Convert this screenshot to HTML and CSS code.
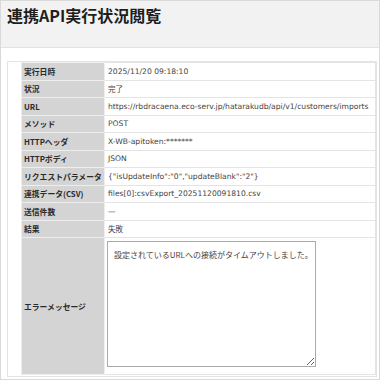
FILE: index.html
```html
<!DOCTYPE html>
<html lang="ja">
<head>
    <meta charset="UTF-8">
    <title>連携API実行状況閲覧</title>
    <link rel="stylesheet" href="styles.css">
</head>
<body>

<div class="window">
    <div class="header">
        <h1 class="title">連携API実行状況閲覧</h1>
    </div>
    <div class="content">
        <div class="panel">
            <table class="detail">
                <tr><th>実行日時</th><td>2025/11/20 09:18:10</td></tr>
                <tr><th>状況</th><td>完了</td></tr>
                <tr><th>URL</th><td>https://rbdracaena.eco-serv.jp/hatarakudb/api/v1/customers/imports</td></tr>
                <tr><th>メソッド</th><td>POST</td></tr>
                <tr><th>HTTPヘッダ</th><td>X-WB-apitoken:*******</td></tr>
                <tr><th>HTTPボディ</th><td>JSON</td></tr>
                <tr><th>リクエストパラメータ</th><td>{"isUpdateInfo":"0","updateBlank":"2"}</td></tr>
                <tr><th>連携データ(CSV)</th><td>files[0]:csvExport_20251120091810.csv</td></tr>
                <tr><th>送信件数</th><td>—</td></tr>
                <tr><th>結果</th><td>失敗</td></tr>
                <tr class="error-row">
                    <th>エラーメッセージ</th>
                    <td><textarea class="message" readonly>設定されているURLへの接続がタイムアウトしました。</textarea></td>
                </tr>
            </table>
        </div>
    </div>
</div>

</body>
</html>
```

FILE: styles.css
```css
body {
    margin: 0;
    font-family: "DejaVu Sans", "Noto Sans CJK JP", sans-serif;
    background-color: #fff;
}

.window {
    width: 378px;
    height: 378px;
    border: 1px solid #d9d9d9;
    background-color: #f4f4f4;
    display: flex;
    flex-direction: column;
}

.header {
    height: 46px;
    background-color: #f2f2f2;
    border-bottom: 1px solid #e2e2e2;
    padding-left: 6px;
}

.title {
    margin: 0;
    padding-top: 3px;
    font-family: "Noto Sans CJK JP", sans-serif;
    font-size: 16px;
    font-weight: bold;
    line-height: 22px;
    color: #1e1e1e;
}

.content {
    flex: 1;
    background-color: #fff;
    padding: 13px 2px 2px 6px;
}

.panel {
    height: 100%;
    box-sizing: border-box;
    border: 1px solid #e4e4e4;
    padding-left: 13px;
}

.detail {
    width: 100%;
    table-layout: fixed;
    border-collapse: collapse;
}

.detail tr {
    height: 17.5px;
}

.detail th {
    width: 78px;
    padding: 0 2px;
    background-color: #d4d4d4;
    border: 1px solid #eeeeee;
    text-align: left;
    font-family: "Noto Sans CJK JP", sans-serif;
    font-size: 7.8px;
    font-weight: bold;
    color: #2a2a2a;
    white-space: nowrap;
}

.detail td {
    padding: 0 2px 0 3px;
    border: 1px solid #e4e4e4;
    font-size: 7.6px;
    color: #444;
    white-space: nowrap;
    overflow: hidden;
}

.detail .error-row {
    height: 137px;
}

.error-row td {
    vertical-align: top;
    padding: 3px 2px 0;
}

.message {
    display: block;
    width: 209px;
    height: 126px;
    box-sizing: border-box;
    margin: 0;
    padding: 7px 2px 7px 6px;
    border: 1px solid #ababab;
    font-family: "Noto Sans CJK JP", sans-serif;
    font-size: 8px;
    color: #444;
    resize: both;
}
```
